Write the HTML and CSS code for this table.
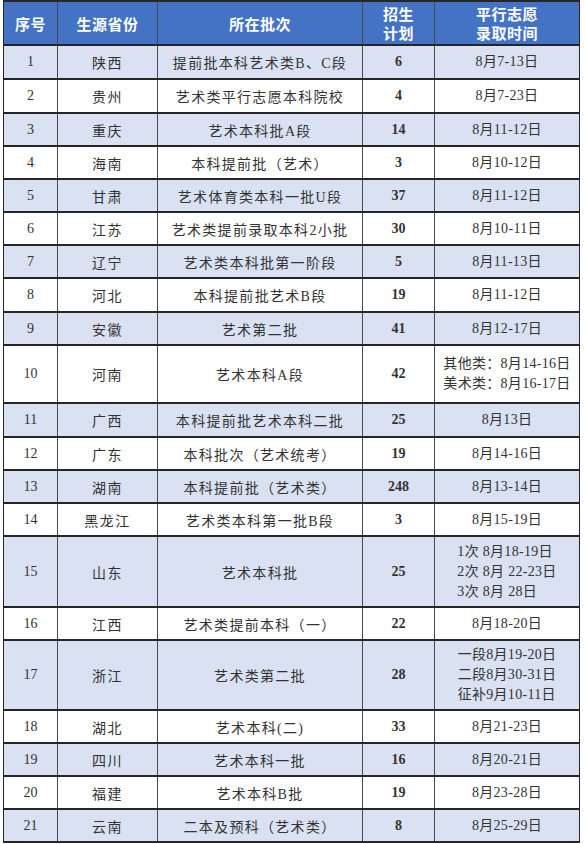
FILE: index.html
```html
<!DOCTYPE html>
<html lang="zh-CN">
<head>
<meta charset="utf-8">
<title>艺术类平行志愿录取时间</title>
<link rel="stylesheet" href="styles.css">
</head>
<body>
<table class="sheet">
  <colgroup>
    <col class="c-no"><col class="c-prov"><col class="c-batch"><col class="c-plan"><col class="c-time">
  </colgroup>
  <thead>
    <tr class="head">
      <th>序号</th><th>生源省份</th><th>所在批次</th><th>招生<br>计划</th><th>平行志愿<br>录取时间</th>
    </tr>
  </thead>
  <tbody>
    <tr class="odd h34"><td class="num">1</td><td class="prov">陕西</td><td class="batch">提前批本科艺术类B、C段</td><td class="plan">6</td><td class="time">8月7-13日</td></tr>
    <tr class="h34"><td class="num">2</td><td class="prov">贵州</td><td class="batch">艺术类平行志愿本科院校</td><td class="plan">4</td><td class="time">8月7-23日</td></tr>
    <tr class="odd"><td class="num">3</td><td class="prov">重庆</td><td class="batch">艺术本科批A段</td><td class="plan">14</td><td class="time">8月11-12日</td></tr>
    <tr><td class="num">4</td><td class="prov">海南</td><td class="batch">本科提前批（艺术）</td><td class="plan">3</td><td class="time">8月10-12日</td></tr>
    <tr class="odd"><td class="num">5</td><td class="prov">甘肃</td><td class="batch">艺术体育类本科一批U段</td><td class="plan">37</td><td class="time">8月11-12日</td></tr>
    <tr><td class="num">6</td><td class="prov">江苏</td><td class="batch">艺术类提前录取本科2小批</td><td class="plan">30</td><td class="time">8月10-11日</td></tr>
    <tr class="odd"><td class="num">7</td><td class="prov">辽宁</td><td class="batch">艺术类本科批第一阶段</td><td class="plan">5</td><td class="time">8月11-13日</td></tr>
    <tr class="h34"><td class="num">8</td><td class="prov">河北</td><td class="batch">本科提前批艺术B段</td><td class="plan">19</td><td class="time">8月11-12日</td></tr>
    <tr class="odd"><td class="num">9</td><td class="prov">安徽</td><td class="batch">艺术第二批</td><td class="plan">41</td><td class="time">8月12-17日</td></tr>
    <tr class="h58"><td class="num">10</td><td class="prov">河南</td><td class="batch">艺术本科A段</td><td class="plan">42</td><td class="time"><span class="lines">其他类：8月14-16日<br>美术类：8月16-17日</span></td></tr>
    <tr class="odd h34"><td class="num">11</td><td class="prov">广西</td><td class="batch">本科提前批艺术本科二批</td><td class="plan">25</td><td class="time">8月13日</td></tr>
    <tr><td class="num">12</td><td class="prov">广东</td><td class="batch">本科批次（艺术统考）</td><td class="plan">19</td><td class="time">8月14-16日</td></tr>
    <tr class="odd"><td class="num">13</td><td class="prov">湖南</td><td class="batch">本科提前批（艺术类）</td><td class="plan">248</td><td class="time">8月13-14日</td></tr>
    <tr><td class="num">14</td><td class="prov">黑龙江</td><td class="batch">艺术类本科第一批B段</td><td class="plan">3</td><td class="time">8月15-19日</td></tr>
    <tr class="odd h71"><td class="num">15</td><td class="prov">山东</td><td class="batch">艺术本科批</td><td class="plan">25</td><td class="time"><span class="lines">1次 8月18-19日<br>2次 8月 22-23日<br>3次 8月 28日</span></td></tr>
    <tr><td class="num">16</td><td class="prov">江西</td><td class="batch">艺术类提前本科（一）</td><td class="plan">22</td><td class="time">8月18-20日</td></tr>
    <tr class="odd h70"><td class="num">17</td><td class="prov">浙江</td><td class="batch">艺术类第二批</td><td class="plan">28</td><td class="time"><span class="lines">一段8月19-20日<br>二段8月30-31日<br>征补9月10-11日</span></td></tr>
    <tr><td class="num">18</td><td class="prov">湖北</td><td class="batch">艺术本科(二)</td><td class="plan">33</td><td class="time">8月21-23日</td></tr>
    <tr class="odd"><td class="num">19</td><td class="prov">四川</td><td class="batch">艺术本科一批</td><td class="plan">16</td><td class="time">8月20-21日</td></tr>
    <tr><td class="num">20</td><td class="prov">福建</td><td class="batch">艺术本科B批</td><td class="plan">19</td><td class="time">8月23-28日</td></tr>
    <tr class="odd"><td class="num">21</td><td class="prov">云南</td><td class="batch">二本及预科（艺术类）</td><td class="plan">8</td><td class="time">8月25-29日</td></tr>
  </tbody>
</table>
</body>
</html>
```

FILE: styles.css
```css
html, body {
  margin: 0;
  padding: 0;
  background: #ffffff;
}

body {
  padding: 0 0 0 3px;
}

.sheet {
  border-collapse: collapse;
  table-layout: fixed;
  width: 576px;
  font-family: "Liberation Serif", "Noto Sans CJK SC", serif;
  font-size: 14px;
  color: #333333;
}

.c-no { width: 54px; }
.c-prov { width: 100px; }
.c-batch { width: 205px; }
.c-plan { width: 72px; }
.c-time { width: 145px; }

.sheet th,
.sheet td {
  border-top: 2px solid #262626;
  border-bottom: 2px solid #262626;
  border-left: 1px solid #4a4a4a;
  border-right: 1px solid #4a4a4a;
  padding: 0;
  text-align: center;
  vertical-align: middle;
  height: 33px;
  box-sizing: border-box;
}

.sheet tr > :first-child { border-left: 1px solid #262626; }
.sheet tr > :last-child { border-right: 1.5px solid #262626; }

.head th {
  height: 44px;
  background: #4472c4;
  color: #ffffff;
  font-family: "Noto Sans CJK SC", sans-serif;
  font-weight: 700;
  font-size: 15px;
  line-height: 19px;
  letter-spacing: 0.5px;
}

.odd td { background: #d9e1f2; }

.h34 td { height: 34px; }
.h58 td { height: 58px; }
.h70 td { height: 70px; }
.h71 td { height: 71px; }

.num { font-size: 14px; }

.prov,
.batch {
  font-family: "Liberation Serif", "Noto Sans CJK SC", serif;
  font-weight: 400;
  font-size: 14px;
  letter-spacing: 1.5px;
}

.batch { letter-spacing: 1.3px; }

.plan { font-weight: 700; }

.time {
  line-height: 20px;
  letter-spacing: 0.3px;
}

.lines {
  display: inline-block;
  text-align: left;
}
```
